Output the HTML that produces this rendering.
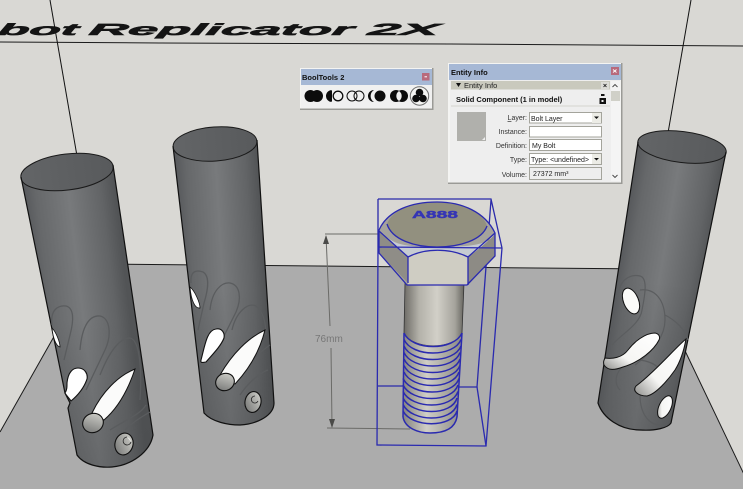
<!DOCTYPE html>
<html><head><meta charset="utf-8"><style>
html,body{margin:0;padding:0;background:#d9d8d4}
svg{display:block;position:absolute;left:0;top:0;filter:blur(.3px)}
text{font-family:"Liberation Sans",sans-serif}
</style></head><body>
<svg width="743" height="489" viewBox="0 0 743 489" xmlns="http://www.w3.org/2000/svg">
<defs>
<linearGradient id="c1" gradientUnits="userSpaceOnUse" x1="21" y1="185" x2="113" y2="174"><stop offset="0" stop-color="#55575a"/><stop offset=".15" stop-color="#66686a"/><stop offset=".5" stop-color="#787a7c"/><stop offset=".85" stop-color="#626466"/><stop offset="1" stop-color="#525456"/></linearGradient>
<linearGradient id="c2" gradientUnits="userSpaceOnUse" x1="173" y1="150" x2="257" y2="145"><stop offset="0" stop-color="#55575a"/><stop offset=".15" stop-color="#66686a"/><stop offset=".5" stop-color="#787a7c"/><stop offset=".85" stop-color="#626466"/><stop offset="1" stop-color="#525456"/></linearGradient>
<linearGradient id="c3" gradientUnits="userSpaceOnUse" x1="638" y1="140" x2="726" y2="155"><stop offset="0" stop-color="#55575a"/><stop offset=".15" stop-color="#66686a"/><stop offset=".5" stop-color="#787a7c"/><stop offset=".85" stop-color="#626466"/><stop offset="1" stop-color="#525456"/></linearGradient>
<linearGradient id="low" x1="0" y1="0" x2="0" y2="1"><stop offset="0" stop-color="#3c3e40" stop-opacity="0"/><stop offset="1" stop-color="#3c3e40" stop-opacity=".28"/></linearGradient>
<linearGradient id="top" x1="0" y1="0" x2="1" y2="0"><stop offset="0" stop-color="#636567"/><stop offset="1" stop-color="#585a5c"/></linearGradient>
<linearGradient id="sh" x1="0" y1="0" x2="1" y2="0"><stop offset="0" stop-color="#6d6b66"/><stop offset=".25" stop-color="#b3b1a9"/><stop offset=".55" stop-color="#d2d0c8"/><stop offset=".85" stop-color="#a5a39c"/><stop offset="1" stop-color="#66655f"/></linearGradient>
<linearGradient id="th" x1="0" y1="0" x2="1" y2="0"><stop offset="0" stop-color="#85847f"/><stop offset=".4" stop-color="#d0cec6"/><stop offset="1" stop-color="#8a8984"/></linearGradient>
<linearGradient id="wh" x1="1" y1="0" x2="0" y2="1"><stop offset="0" stop-color="#fff"/><stop offset=".65" stop-color="#f5f5f3"/><stop offset="1" stop-color="#8f8f8c"/></linearGradient>
<linearGradient id="cap" x1="0" y1="1" x2="1" y2="0"><stop offset="0" stop-color="#6e6f6e"/><stop offset="1" stop-color="#d8d8d2"/></linearGradient>
</defs>

<rect width="743" height="489" fill="#d9d8d4"/>
<!-- room lines -->
<path d="M0 42L160 43L450 44L743 46" stroke="#1c1c1c" stroke-width="1" fill="none"/>
<path d="M50 0L77 156" stroke="#111" stroke-width="1" fill="none"/>
<path d="M691 0L668 133" stroke="#111" stroke-width="1" fill="none"/>
<!-- title -->
<g fill="#141414" stroke="#141414" stroke-width=".6" font-weight="700" font-style="italic">
<text transform="translate(-3 35) skewX(-14) scale(1 .9)" x="0" y="0" font-size="18" textLength="80" lengthAdjust="spacingAndGlyphs">bot</text>
<text transform="translate(88 35) skewX(-14) scale(1 .9)" x="0" y="0" font-size="18" textLength="264" lengthAdjust="spacingAndGlyphs">Replicator</text>
<text transform="translate(367 35) skewX(-14) scale(1 .9)" x="0" y="0" font-size="18" textLength="71" lengthAdjust="spacingAndGlyphs">2X</text>
</g>
<!-- floor -->
<polygon points="0,432 95,264 300,265.500 646,269 751,489 0,489" fill="#acacac"/>
<path d="M0 432L95 264L646 269L751 489" stroke="#1a1a1a" stroke-width="1" fill="none"/>

<!-- CYL 1 -->
<path d="M21 177L65 393L70 403L68 408L77 455C84 465 100 468 112 467C132 465 150 452 153 435L113 165Z" fill="url(#c1)"/>
<path d="M50 320L65 393L70 403L68 408L77 455C84 465 100 468 112 467C132 465 150 452 153 435L136 320Z" fill="url(#low)"/>
<ellipse cx="67" cy="172" rx="46.500" ry="18" transform="rotate(-7 67 172)" fill="url(#top)" stroke="#1a1a1a" stroke-width="1"/>
<path d="M21 177L65 393L70 403L68 408L77 455C84 465 100 468 112 467C132 465 150 452 153 435L113 165" fill="none" stroke="#111" stroke-width="1.200"/>
<g fill="none" stroke="#5a5c5e" stroke-width="1.300">
<path d="M52 325C50 310 58 305 66 306C74 308 74 320 70 335L64 360"/>
<path d="M80 350C82 325 90 315 100 316C110 318 112 335 105 350L86 390"/>
<path d="M100 375C110 350 120 338 130 338C140 340 142 370 140 400"/>
<path d="M110 430C125 420 140 415 146 405"/><path d="M125 430C135 420 145 415 150 412"/>
</g>
<path d="M52 328C56 332 60 342 60 347C56 346 53 338 52 328Z" fill="#fff" stroke="#111" stroke-width=".8"/>
<path d="M67 383C68 372 73 368 78 368C85 368 88 374 87 379C84 388 77 396 71 401C69 398 66 395 65 393C67 390 67 387 67 383Z" fill="#fff" stroke="#111" stroke-width="1.100"/>
<path d="M135 369C118 376 102 392 92 413L104 420C118 408 128 390 135 369Z" fill="#fbfbfa" stroke="#111" stroke-width="1"/>
<ellipse cx="93" cy="423" rx="10.500" ry="9.500" fill="url(#cap)" stroke="#111" stroke-width="1.100" transform="rotate(-25 93 423)"/>
<ellipse cx="124" cy="444" rx="9" ry="11" fill="url(#cap)" stroke="#111" stroke-width="1.100" transform="rotate(15 124 444)"/>
<path d="M127 437a4 4 0 1 0 4 5" fill="none" stroke="#222" stroke-width=".8"/><path d="M127 437a5 5 0 0 1 4 5" fill="#e8e8e4"/>

<!-- CYL 2 -->
<path d="M173 146L204 413C212 422 228 425 240 425C258 424 274 415 274 403L257 140Z" fill="url(#c2)"/>
<path d="M190 290L204 413C212 422 228 425 240 425C258 424 274 415 274 403L266 290Z" fill="url(#low)"/>
<ellipse cx="215" cy="144" rx="42" ry="17" transform="rotate(-4 215 144)" fill="url(#top)" stroke="#1a1a1a" stroke-width="1"/>
<path d="M173 146L204 413C212 422 228 425 240 425C258 424 274 415 274 403L257 140" fill="none" stroke="#111" stroke-width="1.200"/>
<g fill="none" stroke="#5a5c5e" stroke-width="1.300">
<path d="M191 283C190 270 197 270 203 272C210 276 208 290 204 303L198 330"/>
<path d="M210 310C212 290 222 282 230 283C240 285 242 298 236 312L222 340"/>
<path d="M232 330C236 312 248 302 256 306C264 312 266 325 266 335"/>
<path d="M240 395C250 380 262 372 268 370"/><path d="M238 375C245 365 260 352 270 345"/>
</g>
<path d="M190 287C195 291 200 303 200 308C195 309 191 300 190 287Z" fill="#fff" stroke="#111" stroke-width=".8"/>
<path d="M201 360C205 345 207 330 216 329C222 328 225 333 224 338C221 346 212 355 206 362C204 362 200 364 201 360Z" fill="#fff" stroke="#111" stroke-width="1.100"/>
<path d="M265 330C248 338 232 354 220 375L235 384C250 368 260 350 265 330Z" fill="#fbfbfa" stroke="#111" stroke-width="1"/>
<ellipse cx="225" cy="382" rx="9.500" ry="8.500" fill="url(#cap)" stroke="#111" stroke-width="1.100" transform="rotate(-25 225 382)"/>
<ellipse cx="253" cy="402" rx="8" ry="10.500" fill="url(#cap)" stroke="#111" stroke-width="1.100" transform="rotate(10 253 402)"/>
<path d="M255 396a3.500 3.500 0 1 0 3 5" fill="none" stroke="#222" stroke-width=".8"/>

<!-- CYL 3 -->
<path d="M638 142L598 403C603 418 620 430 640 430C655 431 668 428 671 423L726 152Z" fill="url(#c3)"/>
<path d="M619 280L598 403C603 418 620 430 640 430C655 431 668 428 671 423L698 290Z" fill="url(#low)"/>
<ellipse cx="682" cy="147" rx="44.500" ry="15.500" transform="rotate(7 682 147)" fill="url(#top)" stroke="#1a1a1a" stroke-width="1"/>
<path d="M638 142L598 403C603 418 620 430 640 430C655 431 668 428 671 423L726 152" fill="none" stroke="#111" stroke-width="1.200"/>
<g fill="none" stroke="#5b5d5f" stroke-width="1.200">
<path d="M619 290C622 278 632 274 640 276C648 278 645 295 642 310C640 325 620 335 612 345"/>
<path d="M640 290C655 288 665 300 665 320C665 335 655 350 635 365"/>
<path d="M665 315C675 320 686 330 688 340"/>
<path d="M620 390C610 380 620 360 640 360C655 362 665 370 660 380"/>
<path d="M640 395C640 415 650 425 660 425"/>
</g>
<ellipse cx="631" cy="301" rx="7.500" ry="13.500" fill="#fbfbf9" stroke="#111" stroke-width="1" transform="rotate(-22 631 301)"/>
<path d="M605 358C612 359 622 358 628 350C634 342 645 333 655 333C660 334 660 338 659 340C654 350 640 362 623 367C615 370 608 371 604 365C603 362 604 360 605 358Z" fill="url(#wh)" stroke="#111" stroke-width="1"/>
<path d="M686 339C675 348 655 372 636 386C632 391 638 396 647 396C656 394 668 380 675 370C680 362 684 350 686 339Z" fill="url(#wh)" stroke="#111" stroke-width="1"/>
<ellipse cx="665" cy="407" rx="6" ry="12" fill="url(#wh)" stroke="#111" stroke-width="1" transform="rotate(25 665 407)"/>

<!-- dimension -->
<g stroke="#6b6b68" stroke-width="1" fill="none">
<path d="M325 234H378M327 428L410 429"/>
<path d="M326 236L330 326M331 348L332 426"/>
</g>
<path d="M326 235L323 244H329Z M332 428L329 419H335Z" fill="#4a4a48"/>
<text x="315" y="342" font-size="10" fill="#777">76mm</text>

<!-- bolt selection back -->
<g fill="none" stroke="#2a2aaa" stroke-width="1.300">
<path d="M378 199H491L502 248M378 199L378 247M491 200L477 387H457M403 386H378"/>
</g>
<!-- shank -->
<path d="M405 283H464L462 333C455 350 412 350 404 333Z" fill="url(#sh)" stroke="#333" stroke-width=".8"/>
<path d="M404 333C412 350 455 350 462 333L457 417C455 430 440 433 430 433C415 433 404 428 403 417Z" fill="url(#th)"/>
<g fill="none" stroke="#2a2ab0" stroke-width="1.500">
<path d="M404 333C412 351 454 351 462 333"/>
<path d="M404 339.500C412 357.500 454 357.500 461 339.500"/>
<path d="M404 346C412 364 454 364 461 346"/>
<path d="M404 352.500C412 370.500 454 370.500 460 352.500"/>
<path d="M404 359C412 377 454 377 460 359"/>
<path d="M404 365.500C412 383.500 453 383.500 460 365.500"/>
<path d="M404 372C412 390 453 390 459 372"/>
<path d="M403 378.500C412 396.500 453 396.500 459 378.500"/>
<path d="M403 385C412 403 452 403 458 385"/>
<path d="M403 391.500C412 409.500 452 409.500 458 391.500"/>
<path d="M403 398C412 416 452 416 457 398"/>
<path d="M403 404.500C412 422.500 452 422.500 457 404.500"/>
<path d="M403 411C412 428 452 428 457 411"/>
<path d="M403 417C405 428 418 433 430 433C445 433 455 428 457 417"/>
<path d="M404 333L403 417M462 333L457 417"/>
</g>
<!-- head -->
<path d="M379 230C388 210 412 202 437 202C462 202 485 212 495 233V256L467 285H407L379 253Z" fill="#a5a39c"/>
<path d="M408 257C425 248 450 248 468 257V285H408Z" fill="#cfcdc3"/>
<path d="M379 231L408 257V283L379 253Z" fill="#8f8d87"/>
<path d="M495 233L468 257V285L495 256Z" fill="#8d8b85"/>
<path d="M387 224C392 240 415 247 437 247C460 247 482 240 487 226C482 210 460 202 437 202C412 202 392 210 387 224Z" fill="#92907f"/>
<path d="M381 231C390 243 400 250 408 257C425 248 450 248 468 257C478 250 488 242 495 233C490 245 470 247 437 247C405 247 392 245 381 231Z" fill="#c6cbd2"/>
<g fill="none" stroke="#2a2ab0" stroke-width="1.300">
<path d="M379 230C388 210 412 202 437 202C462 202 485 212 495 233V256L467 285H407L379 253Z"/>
<path d="M387 224C392 240 415 247 437 247C460 247 482 240 487 226"/>
<path d="M408 257V283M468 257V285M408 257C425 248 450 248 468 257"/>
<path d="M379 231L408 257M495 233L468 257"/>
</g>
<g fill="none" stroke="#2a2ab0" stroke-width="1.300">
<path d="M378 247L502 248M378 247L377 445L486 446L502 248"/>
<path d="M477 387L486 446"/>
</g>
<text x="412" y="218" font-size="10" font-weight="700" fill="#3535b5" stroke="#3535b5" stroke-width=".4" textLength="46" lengthAdjust="spacingAndGlyphs">A888</text>

<!-- BoolTools panel -->
<rect x="300" y="68" width="133" height="42" fill="#f4f4f2"/>
<rect x="432" y="68" width="1.500" height="42" fill="#9a9a96"/>
<rect x="300" y="108.500" width="133" height="1.500" fill="#9a9a96"/>
<rect x="301" y="69" width="131" height="16" fill="#a6b8d5"/>
<rect x="301" y="85" width="131" height="23" fill="#f0f0f0"/>
<text x="302" y="80" font-size="7.500" font-weight="700" fill="#111">BoolTools 2</text>
<rect x="422" y="73" width="7.500" height="7.500" fill="#b86a7c"/><path d="M424.500 76.800h2.500" stroke="#fff" stroke-width="1"/>
<g fill="#0c0c0c">
<circle cx="310.500" cy="96" r="6"/><circle cx="317" cy="96" r="6"/>
<path d="M332 90a6 6 0 0 0 0 12a7 7 0 0 1 0-12z"/><path d="M332 90.500a6 6 0 0 0-5 5.500a6 6 0 0 0 5 5.500z"/>
<circle cx="338" cy="96" r="4.800" fill="#f0f0f0" stroke="#0c0c0c" stroke-width="1.300"/>
<circle cx="352" cy="96" r="5" fill="none" stroke="#0c0c0c" stroke-width="1"/><circle cx="359" cy="96" r="5" fill="none" stroke="#0c0c0c" stroke-width="1"/>
<path d="M374 90a6 6 0 0 0 0 12a7 7 0 0 1 0-12z"/><circle cx="380" cy="96" r="5.500"/>
<circle cx="396" cy="96" r="6"/><circle cx="402" cy="96" r="6"/>
<path d="M399 91a6 6 0 0 1 0 10a6 6 0 0 1 0-10z" fill="#f0f0f0"/>
</g>
<circle cx="419.500" cy="96" r="9.200" fill="#f4f4f2" stroke="#6d6d6d" stroke-width="1"/>
<g fill="#0c0c0c"><circle cx="419.500" cy="92.500" r="3.800"/><circle cx="416" cy="98.500" r="3.800"/><circle cx="423" cy="98.500" r="3.800"/></g>

<!-- Entity Info panel -->
<rect x="448" y="63" width="174" height="120" fill="#f4f4f2"/>
<rect x="621" y="63" width="1.500" height="121" fill="#9a9a96"/>
<rect x="448" y="182.500" width="174" height="1.500" fill="#9a9a96"/>
<rect x="449" y="64" width="172" height="16" fill="#a6b8d5"/>
<rect x="450" y="80" width="170" height="102" fill="#eeeeee"/>
<text x="451" y="75" font-size="7.500" font-weight="700" fill="#111">Entity Info</text>
<rect x="611" y="67" width="8" height="8" fill="#b86a7c"/><path d="M613 69.500l3.500 3M616.500 69.500l-3.500 3" stroke="#fff" stroke-width=".9"/>
<rect x="451" y="81" width="159" height="8.500" fill="#c9c9bd"/>
<path d="M456 83h5l-2.500 4z" fill="#111"/>
<text x="464" y="88" font-size="7.500" fill="#222">Entity Info</text>
<rect x="601" y="82" width="8" height="7" fill="#dcdcd6"/><path d="M603.500 84l3 3M606.500 84l-3 3" stroke="#111" stroke-width=".8"/>
<rect x="611" y="81" width="9" height="100" fill="#f4f4f4"/>
<path d="M612.500 87l2.500-2.500 2.500 2.500M612.500 175l2.500 2.500 2.500-2.500" stroke="#444" stroke-width=".9" fill="none"/>
<rect x="611" y="91" width="9" height="10" fill="#d0d0c8"/>
<text x="456" y="102" font-size="7.500" font-weight="700" fill="#111">Solid Component (1 in model)</text>
<rect x="599.500" y="98" width="6.500" height="6" fill="#111"/><rect x="601" y="94" width="3.500" height="2" fill="#111"/>
<rect x="601.500" y="100" width="2" height="2" fill="#eee"/>
<path d="M451 106H610" stroke="#d4d4cd" stroke-width="1"/>
<rect x="457" y="112" width="29" height="29" fill="#b0b0ac"/>
<path d="M482 140l3-3v3z" fill="#eee"/>
<g font-size="7" fill="#333" text-anchor="end">
<text x="527" y="120"><tspan text-decoration="underline">L</tspan>ayer:</text>
<text x="527" y="134">Instance:</text>
<text x="527" y="148">Definition:</text>
<text x="527" y="162">Type:</text>
<text x="527" y="177">Volume:</text>
</g>
<g fill="#fff" stroke="#a4a49c" stroke-width="1">
<rect x="529.500" y="112.500" width="72" height="10.500"/>
<rect x="529.500" y="126.500" width="72" height="10.500"/>
<rect x="529.500" y="139.500" width="72" height="11"/>
<rect x="529.500" y="153.500" width="72" height="11"/>
</g>
<rect x="529.500" y="167.500" width="72" height="12" fill="#eeeeee" stroke="#a4a49c" stroke-width="1"/>
<rect x="592" y="113" width="9" height="10" fill="#ecece6"/><path d="M594 116.500h5l-2.500 2.500z" fill="#111"/>
<rect x="592" y="154" width="9" height="10" fill="#ecece6"/><path d="M594 158h5l-2.500 2.500z" fill="#111"/>
<g font-size="7" fill="#222">
<text x="531" y="121">Bolt Layer</text>
<text x="532" y="148">My Bolt</text>
<text x="531" y="162">Type: &lt;undefined&gt;</text>
<text x="533" y="176">27372 mm³</text>
</g>
</svg>
</body></html>
